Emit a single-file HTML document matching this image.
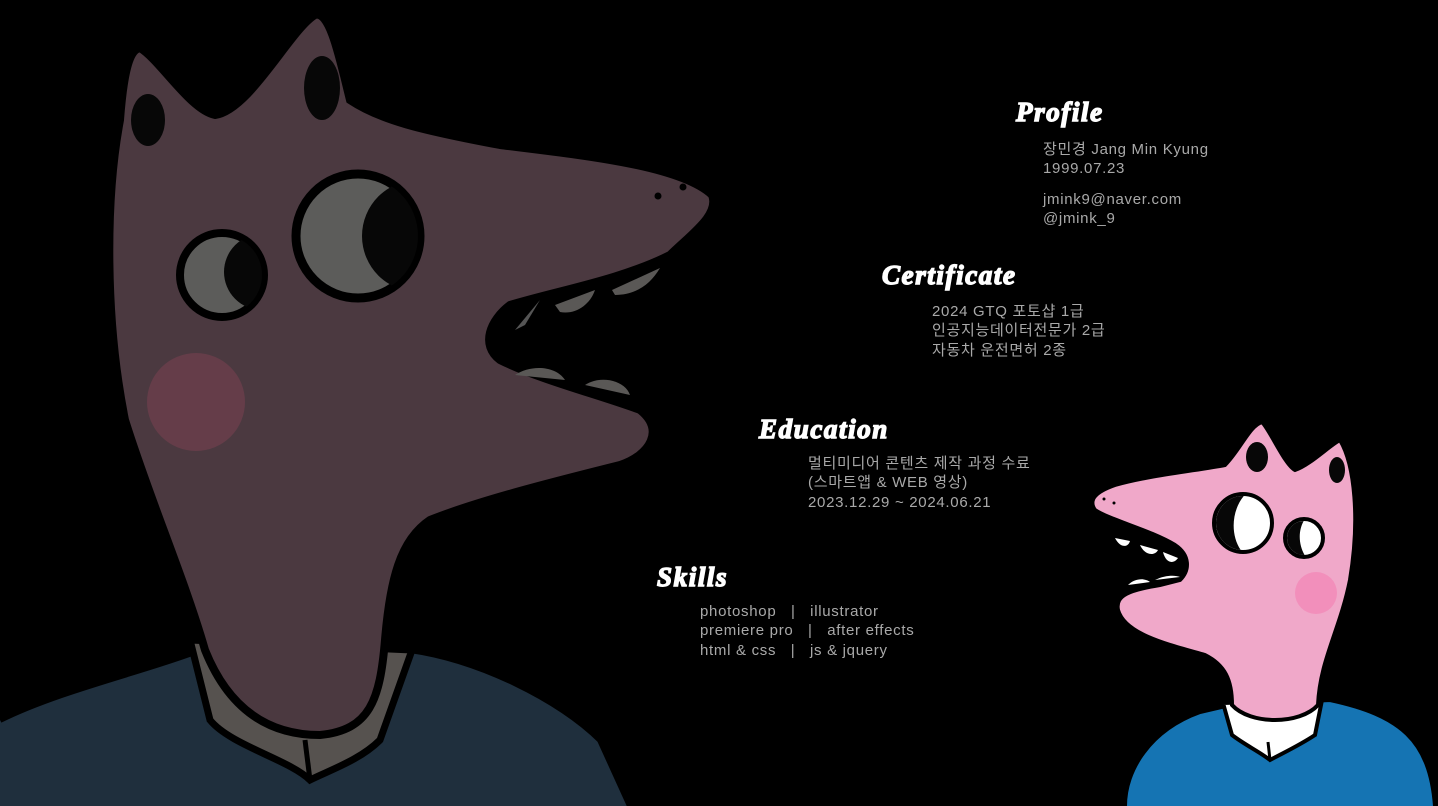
<!DOCTYPE html>
<html><head><meta charset="utf-8"><style>
html,body{margin:0;padding:0;background:#000;width:1438px;height:806px;overflow:hidden;position:relative}
svg{position:absolute;left:0;top:0}
.h{position:absolute;font-family:"Liberation Serif",serif;font-weight:bold;font-style:italic;color:#fff;font-size:27px;line-height:26px;letter-spacing:1.6px;-webkit-text-stroke:1.4px #fff}
.t{position:absolute;font-family:"Liberation Sans","Noto Sans CJK KR",sans-serif;color:#a9a9a9;font-size:15px;line-height:19.3px;white-space:pre;letter-spacing:0.7px}
</style></head><body>
<svg width="1438" height="806" viewBox="0 0 1438 806">
 <defs>
  <clipPath id="e1"><circle cx="358" cy="236" r="60"/></clipPath>
  <clipPath id="e2"><circle cx="222" cy="275" r="40"/></clipPath>
  <clipPath id="e3"><circle cx="1243" cy="523" r="27"/></clipPath>
  <clipPath id="e4"><circle cx="1304" cy="538" r="17"/></clipPath>
 </defs>
 <path d="M0 720 C60 690 150 670 200 650 L410 650 C480 660 560 700 600 740 L630 806 L0 806 Z" fill="#1f2f3d"/>
 <path d="M0 720 C60 690 150 670 200 650 L410 650 C480 660 560 700 600 740 L630 806" fill="none" stroke="#000" stroke-width="6"/>
 <path d="M190 640 L210 720 C230 745 290 760 310 780 C330 770 360 760 380 740 L412 650 Z" fill="#56524f" stroke="#000" stroke-width="7"/>
 <path d="M310 780 L305 740" stroke="#000" stroke-width="5"/>
 <path d="M205 650 C185 580 150 500 125 420 C105 320 105 200 120 120 C123 80 128 50 140 48 C160 60 190 110 215 115 C250 110 290 30 315 15 C330 10 340 60 350 100 C380 120 420 130 500 145 C580 155 680 165 712 195 C720 215 690 235 670 255 C620 280 560 290 510 305 C490 320 480 345 500 360 C540 380 600 395 640 410 C665 430 650 455 620 465 C560 480 480 500 430 520 C400 540 390 580 385 640 C380 700 370 730 320 735 C260 735 225 700 205 650 Z" fill="#4b3940" stroke="#000" stroke-width="8"/>
 <path d="M515 330 L540 300 L525 325 Z" fill="#555"/>
 <path d="M555 305 L595 290 C590 305 575 315 560 312 Z" fill="#5a5856"/>
 <path d="M612 290 L660 268 C650 285 635 295 615 295 Z" fill="#5a5856"/>
 <path d="M515 375 C530 365 555 365 565 380 Z" fill="#5a5856"/>
 <path d="M585 385 C600 375 625 380 630 395 Z" fill="#5a5856"/>
 <ellipse cx="148" cy="120" rx="17" ry="26" fill="#070707"/>
 <ellipse cx="322" cy="88" rx="18" ry="32" fill="#070707"/>
 <circle cx="658" cy="196" r="3.5" fill="#000"/><circle cx="683" cy="187" r="3.5" fill="#000"/>
 <circle cx="358" cy="236" r="62" fill="#5c5c5a" stroke="#000" stroke-width="9"/>
 <g clip-path="url(#e1)"><circle cx="418" cy="236" r="56" fill="#070707"/></g>
 <circle cx="222" cy="275" r="42" fill="#5c5c5a" stroke="#000" stroke-width="8"/>
 <g clip-path="url(#e2)"><circle cx="262" cy="272" r="38" fill="#070707"/></g>
 <circle cx="196" cy="402" r="49" fill="#653d49"/>
 <path d="M1125 806 C1125 770 1150 730 1200 712 L1230 705 L1330 700 C1400 715 1430 740 1435 806 Z" fill="#1574b3"/>
 <path d="M1125 806 C1125 770 1150 730 1200 712 L1230 705 L1330 700 C1400 715 1430 740 1435 806" fill="none" stroke="#000" stroke-width="4"/>
 <path d="M1223 703 L1232 735 C1245 745 1260 752 1270 760 C1285 752 1300 745 1315 735 L1322 700 Z" fill="#fff" stroke="#000" stroke-width="4"/>
 <path d="M1270 760 L1268 742" stroke="#000" stroke-width="3"/>
 <path d="M1232 705 C1232 680 1225 665 1205 655 C1170 645 1125 635 1118 610 C1115 595 1130 590 1160 585 L1180 580 C1190 570 1190 555 1175 545 C1150 530 1110 520 1095 510 C1088 500 1095 492 1115 485 C1150 475 1200 470 1225 465 C1240 450 1250 425 1262 422 C1270 430 1285 465 1295 470 C1310 465 1330 445 1340 440 C1355 465 1360 520 1350 580 C1340 630 1320 660 1318 705 C1300 725 1250 725 1232 705 Z" fill="#f0a8c9" stroke="#000" stroke-width="4"/>
 <path d="M1112 535 L1170 548 L1180 575 L1130 585 Z" fill="#000"/>
 <path d="M1115 538 L1130 541 C1128 548 1120 548 1115 538 Z" fill="#fff"/>
 <path d="M1140 545 L1158 550 C1155 556 1145 556 1140 545 Z" fill="#fff"/>
 <path d="M1163 552 L1178 558 C1174 564 1166 564 1163 552 Z" fill="#fff"/>
 <path d="M1128 585 C1135 578 1145 578 1150 582 Z" fill="#fff"/>
 <path d="M1155 580 C1165 575 1175 575 1180 577 Z" fill="#fff"/>
 <ellipse cx="1257" cy="457" rx="11" ry="15" fill="#070707"/>
 <ellipse cx="1337" cy="470" rx="8" ry="13" fill="#070707"/>
 <circle cx="1104" cy="499" r="1.5" fill="#000"/><circle cx="1114" cy="503" r="1.5" fill="#000"/>
 <circle cx="1243" cy="523" r="29" fill="#fff" stroke="#000" stroke-width="4"/>
 <g clip-path="url(#e3)"><path d="M1200 490 L1250 490 C1230 505 1228 540 1246 556 L1200 556 Z" fill="#070707"/></g>
 <circle cx="1304" cy="538" r="19" fill="#fff" stroke="#000" stroke-width="4"/>
 <g clip-path="url(#e4)"><path d="M1280 515 L1308 515 C1296 528 1298 548 1308 560 L1280 560 Z" fill="#070707"/></g>
 <circle cx="1316" cy="593" r="21" fill="#f28fbb"/>
</svg>
<div class="h" style="left:1016px;top:99px">Profile</div>
<div class="t" style="left:1043px;top:140px">장민경 Jang Min Kyung
1999.07.23</div>
<div class="t" style="left:1043px;top:190px">jmink9@naver.com
@jmink_9</div>
<div class="h" style="left:882px;top:262px">Certificate</div>
<div class="t" style="left:932px;top:302px">2024 GTQ 포토샵 1급
인공지능데이터전문가 2급
자동차 운전면허 2종</div>
<div class="h" style="left:759px;top:416px">Education</div>
<div class="t" style="left:808px;top:454px">멀티미디어 콘텐츠 제작 과정 수료
(스마트앱 &amp; WEB 영상)
2023.12.29 ~ 2024.06.21</div>
<div class="h" style="left:657px;top:564px">Skills</div>
<div class="t" style="left:700px;top:602px">photoshop   |   illustrator
premiere pro   |   after effects
html &amp; css   |   js &amp; jquery</div>
</body></html>
